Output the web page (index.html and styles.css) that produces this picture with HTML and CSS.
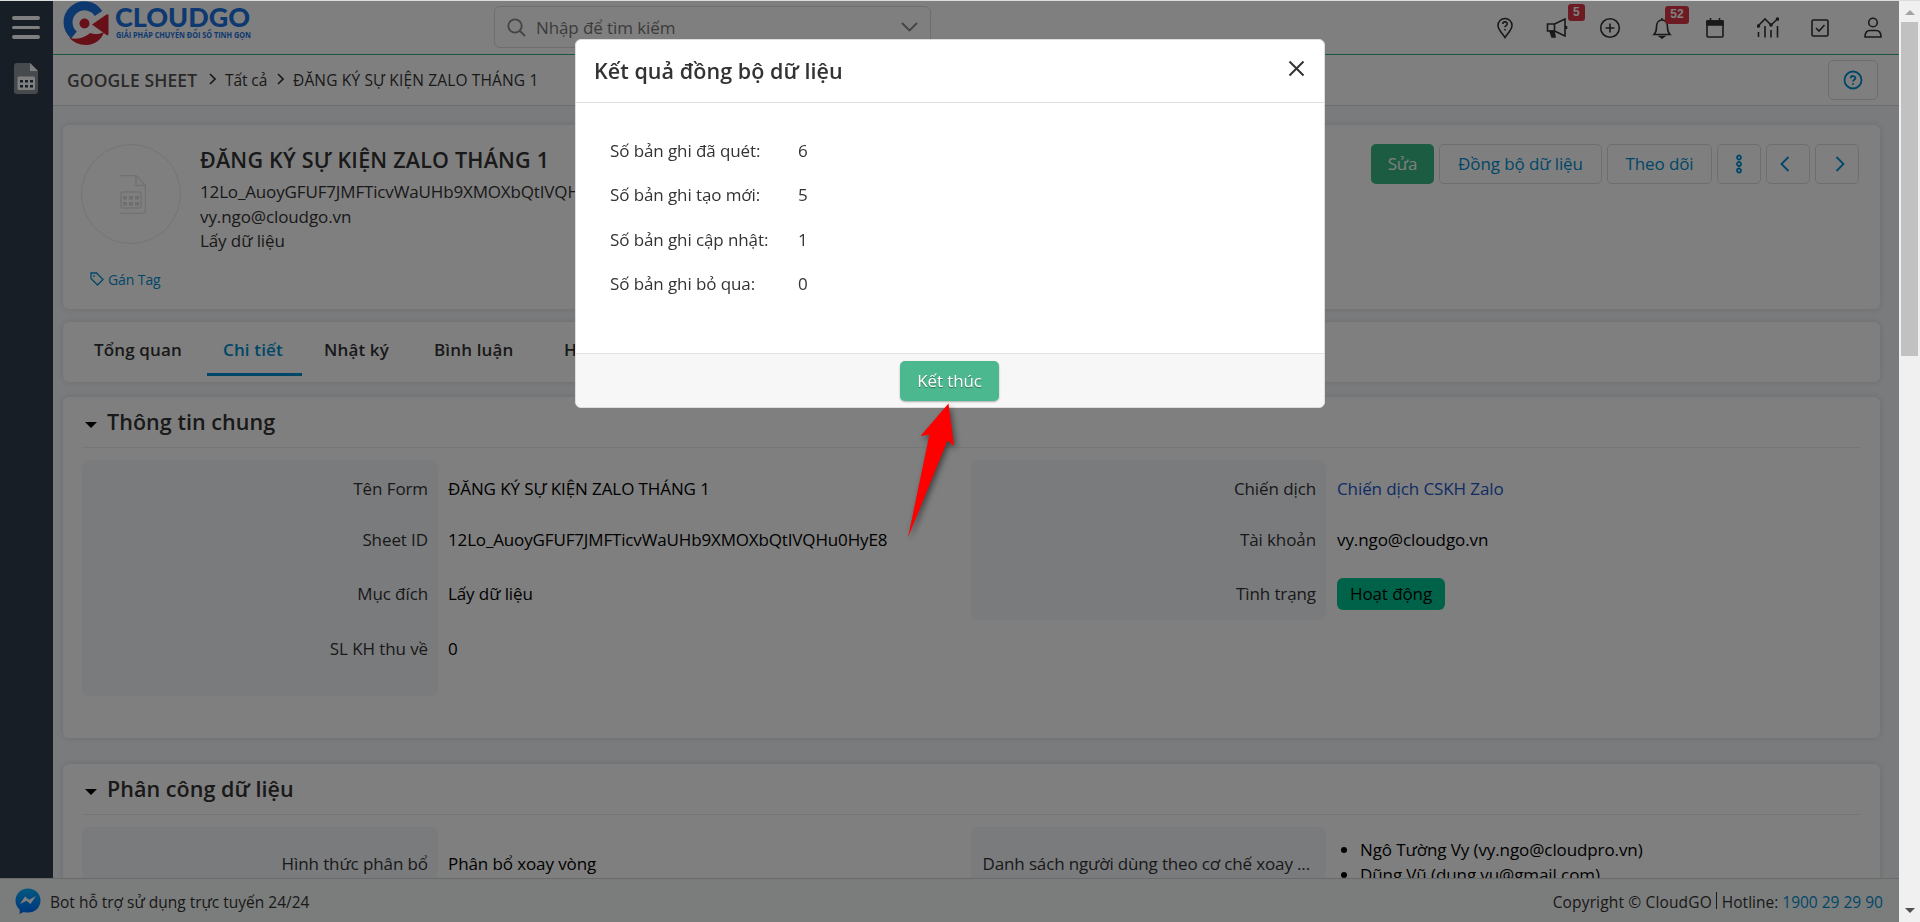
FILE: index.html
```html
<!DOCTYPE html>
<html lang="vi">
<head>
    <meta charset="UTF-8">
    <meta name="viewport" content="width=device-width, initial-scale=1.0">
    <title>CloudGO - Google Sheet</title>
    <link rel="stylesheet" href="styles.css">
</head>
<body>
    <div class="window">
        <div class="page">
            <div class="main">
                <!-- Sidebar -->
                <nav class="sidebar">
                    <div class="menu-toggle"><span></span><span></span><span></span></div>
                    <svg class="module-icon" width="24" height="31" viewBox="0 0 24 31">
                        <path d="M3 0h13l8 8v20a3 3 0 0 1-3 3H3a3 3 0 0 1-3-3V3a3 3 0 0 1 3-3z" fill="#8f959b"/>
                        <path d="M16 0v8h8z" fill="#fff"/>
                        <rect x="3.5" y="13.5" width="17.500" height="13.500" rx="1.500" fill="#fff"/>
                        <path d="M6 17h3v2.500H6zM11 17h3v2.500h-3zM16 17h3v2.500h-3zM6 22h3v2.500H6zM11 22h3v2.500h-3zM16 22h3v2.500h-3z" fill="#2c3b49"/>
                    </svg>
                </nav>

                <div class="content">
                    <!-- Header -->
                    <header class="topbar">
                        <svg class="logo" width="192" height="46" viewBox="0 0 192 46">
                            <path d="M35.500 12.500A16.500 16.500 0 1 0 11 34" fill="none" stroke="#1a72e0" stroke-width="9"/>
                            <path d="M6 36.500c8 3 16 0 21-4.500 6 2 10 1 14-1-2 7-9 13-18 13-7 0-13-3-17-7.500z" fill="#cf2030"/>
                            <circle cx="21.500" cy="22.500" r="5" fill="#cf2030"/>
                            <path d="M29 23.500L43.500 13.500q2-1 2 1v18.500q0 2-2 1z" fill="#cf2030"/>
                            <text class="logo-name" x="52" y="26" textLength="135" lengthAdjust="spacingAndGlyphs">CLOUDGO</text>
                            <text class="logo-slogan" x="53" y="37" textLength="135" lengthAdjust="spacingAndGlyphs">GIẢI PHÁP CHUYỂN ĐỔI SỐ TINH GỌN</text>
                        </svg>
                        <div class="search">
                            <svg width="19" height="19" viewBox="0 0 19 19"><circle cx="8" cy="8" r="6.700"/><path d="M13 13l5 5"/></svg>
                            <span>Nhập để tìm kiếm</span>
                            <svg width="17" height="10" viewBox="0 0 17 10"><path d="M1 1l7.500 7.500L16 1"/></svg>
                        </div>
                        <div class="tools">
                            <div class="tool">
                                <svg viewBox="0 0 22 22"><path d="M11 20.500C8 16 4 12.500 4 8.500a7 7 0 0 1 14 0c0 4-4 7.500-7 12z"/><path d="M8.800 7c.2-3 4.600-2.700 4.400 0-.1 1.500-2.200 1.600-2.200 3.200M11 12v1.500"/></svg>
                            </div>
                            <div class="tool">
                                <svg viewBox="0 0 22 22"><path d="M1.500 7h7v7h-7zM8.500 7L19 2v17L8.500 14M20.500 9v3"/><path d="M4 14h4l1 6H6z" fill="#333"/></svg>
                                <b class="badge">5</b>
                            </div>
                            <div class="tool">
                                <svg viewBox="0 0 22 22"><circle cx="11" cy="11" r="9.300"/><path d="M11 6.500v9M6.500 11h9"/></svg>
                            </div>
                            <div class="tool">
                                <svg viewBox="0 0 22 22"><path d="M3 17.500c2-2 2.500-4 2.500-7.500 0-4 2-7 5.500-7s5.500 3 5.500 7c0 3.500.5 5.500 2.500 7.500zM11 1v2"/><path d="M9 19.500h4l-2 1.500z" fill="#333"/></svg>
                                <b class="badge badge-wide">52</b>
                            </div>
                            <div class="tool">
                                <svg viewBox="0 0 22 22"><rect x="3" y="4" width="16" height="16" rx="1"/><path d="M3 4h16v4H3zM6.500 1v3M15.500 1v3" fill="#333"/></svg>
                            </div>
                            <div class="tool">
                                <svg viewBox="0 0 22 22"><path d="M1 9l7-7 6 6 7-6.500"/><path d="M1.500 15v5M8 9v11.500M14 13v7.500M20.500 9v11.500"/><circle cx="1.500" cy="9" r="1" fill="#333"/><circle cx="14" cy="8" r="1" fill="#333"/><circle cx="20.500" cy="2" r="1" fill="#333"/></svg>
                            </div>
                            <div class="tool">
                                <svg viewBox="0 0 22 22"><rect x="3" y="3" width="16" height="16" rx="1.500"/><path d="M7 11l3 3 5.500-6"/></svg>
                            </div>
                            <div class="tool">
                                <svg viewBox="0 0 22 22"><circle cx="11" cy="5.500" r="4.300"/><path d="M3 20c0-4 2-6.500 5-6.500h6c3 0 5 2.500 5 6.500z"/></svg>
                            </div>
                        </div>
                    </header>

                    <!-- Breadcrumb -->
                    <div class="breadcrumb">
                        <span class="crumb-module">GOOGLE SHEET</span>
                        <svg width="7" height="12" viewBox="0 0 7 12"><path d="M1 1l5 5-5 5"/></svg>
                        <span class="crumb crumb-all">Tất cả</span>
                        <svg width="7" height="12" viewBox="0 0 7 12"><path d="M1 1l5 5-5 5"/></svg>
                        <span class="crumb crumb-name">ĐĂNG KÝ SỰ KIỆN ZALO THÁNG 1</span>
                        <div class="btn help-btn">
                            <svg width="20" height="20" viewBox="0 0 20 20"><circle cx="10" cy="10" r="8.500"/><path d="M7.600 8.200c.2-3 4.900-2.800 4.800 0-.1 1.600-2.400 1.700-2.400 3.300M10 13.200v1.500"/></svg>
                        </div>
                    </div>

                    <div class="body">
                        <!-- Record summary -->
                        <section class="card summary">
                            <div class="avatar">
                                <svg width="30" height="39" viewBox="0 0 30 39">
                                    <path d="M4 .5h16l9.500 10V35a3.500 3.500 0 0 1-3.500 3.500H4"/>
                                    <path d="M20 .5v10h9.500"/>
                                    <rect x="5" y="17" width="20" height="16" rx="2"/>
                                    <path class="dots" d="M7 21h4v3.500H7zM13 21h4v3.500h-4zM19 21h4v3.500h-4zM7 27h4v3.500H7zM13 27h4v3.500h-4zM19 27h4v3.500h-4z"/>
                                </svg>
                            </div>
                            <div class="summary-info">
                                <h1>ĐĂNG KÝ SỰ KIỆN ZALO THÁNG 1</h1>
                                <p class="sheet-id">12Lo_AuoyGFUF7JMFTicvWaUHb9XMOXbQtIVQHu0HyE8</p>
                                <p>vy.ngo@cloudgo.vn</p>
                                <p>Lấy dữ liệu</p>
                            </div>
                            <div class="actions">
                                <div class="btn btn-edit">Sửa</div>
                                <div class="btn btn-sync">Đồng bộ dữ liệu</div>
                                <div class="btn btn-follow">Theo dõi</div>
                                <div class="btn btn-icon"><svg width="8" height="20" viewBox="0 0 8 20"><circle cx="4" cy="3.500" r="2"/><circle cx="4" cy="10" r="2"/><circle cx="4" cy="16.500" r="2"/></svg></div>
                                <div class="btn btn-icon btn-prev"><svg width="10" height="16" viewBox="0 0 10 16"><path d="M8.500 1L1.500 8l7 7"/></svg></div>
                                <div class="btn btn-icon btn-next"><svg width="10" height="16" viewBox="0 0 10 16"><path d="M1.500 1l7 7-7 7"/></svg></div>
                            </div>
                            <div class="tag">
                                <svg width="14" height="14" viewBox="0 0 14 14"><path d="M1 1h5.500L13 7.500 7.500 13 1 6.500z"/><circle cx="4" cy="4" r=".3"/></svg>
                                <span>Gán Tag</span>
                            </div>
                        </section>

                        <!-- Tabs -->
                        <section class="card tabs">
                            <div class="tab tab-overview"><span>Tổng quan</span></div>
                            <div class="tab tab-detail active"><span>Chi tiết</span></div>
                            <div class="tab tab-log"><span>Nhật ký</span></div>
                            <div class="tab tab-comment"><span>Bình luận</span></div>
                            <div class="tab"><span>Hoạt động</span></div>
                        </section>

                        <section class="card block block-general">
                            <h2><i class="caret"></i><span>Thông tin chung</span></h2>
                            <div class="fields">
                                <div class="labels labels-long">
                                    <div>Tên Form</div>
                                    <div>Sheet ID</div>
                                    <div>Mục đích</div>
                                    <div>SL KH thu về</div>
                                </div>
                                <div class="values">
                                    <div class="v-name">ĐĂNG KÝ SỰ KIỆN ZALO THÁNG 1</div>
                                    <div class="sheet-id">12Lo_AuoyGFUF7JMFTicvWaUHb9XMOXbQtIVQHu0HyE8</div>
                                    <div>Lấy dữ liệu</div>
                                    <div>0</div>
                                </div>
                                <div class="labels">
                                    <div>Chiến dịch</div>
                                    <div>Tài khoản</div>
                                    <div>Tình trạng</div>
                                </div>
                                <div class="values values-right">
                                    <div><a class="campaign">Chiến dịch CSKH Zalo</a></div>
                                    <div>vy.ngo@cloudgo.vn</div>
                                    <div class="v-status"><span class="status">Hoạt động</span></div>
                                </div>
                            </div>
                        </section>

                        <section class="card block block-assign">
                            <h2><i class="caret"></i><span>Phân công dữ liệu</span></h2>
                            <div class="fields fields-assign">
                                <div class="labels">
                                    <div>Hình thức phân bổ</div>
                                </div>
                                <div class="values">
                                    <div>Phân bổ xoay vòng</div>
                                </div>
                                <div class="labels">
                                    <div class="label-cut">Danh sách người dùng theo cơ chế xoay ...</div>
                                </div>
                                <ul class="users">
                                    <li>Ngô Tường Vy (vy.ngo@cloudpro.vn)</li>
                                    <li>Dũng Vũ (dung.vu@gmail.com)</li>
                                </ul>
                            </div>
                        </section>
                    </div>
                </div>
            </div>

            <footer class="footer">
                <svg width="26" height="26" viewBox="0 0 26 26">
                    <defs><linearGradient id="msg" x1="0" y1="0" x2="0" y2="1"><stop offset="0" stop-color="#00b2ff"/><stop offset="1" stop-color="#006aff"/></linearGradient></defs>
                    <path d="M13 .5C6 .5.500 5.500.500 12.500c0 3.800 1.600 7 4.200 9.200V26l4-2c1.300.4 2.800.6 4.300.6 7 0 12.500-5.200 12.500-12.100S20 .5 13 .5z" fill="url(#msg)"/>
                    <path d="M5 16l5-7.500 4 3.200L21 8l-5.500 8-4-3.200z" fill="#fff"/>
                </svg>
                <span class="bot">Bot hỗ trợ sử dụng trực tuyến 24/24</span>
                <span class="copyright">Copyright © CloudGO</span>
                <i class="sep"></i>
                <span class="hotline">Hotline: <a>1900 29 29 90</a></span>
            </footer>
        </div>

        <!-- Scrollbar -->
        <div class="scrollbar">
            <i class="arrow-up"></i>
            <div class="thumb"></div>
            <i class="arrow-down"></i>
        </div>
    </div>

    <div class="backdrop"></div>

    <!-- Sync result modal -->
    <div class="modal">
        <div class="modal-header">
            <h3>Kết quả đồng bộ dữ liệu</h3>
            <svg width="17" height="17" viewBox="0 0 17 17"><path d="M1.500 1.500l14 14M15.500 1.500l-14 14"/></svg>
        </div>
        <div class="modal-body">
            <div class="result"><span>Số bản ghi đã quét:</span><span>6</span></div>
            <div class="result"><span>Số bản ghi tạo mới:</span><span>5</span></div>
            <div class="result"><span>Số bản ghi cập nhật:</span><span>1</span></div>
            <div class="result"><span>Số bản ghi bỏ qua:</span><span>0</span></div>
        </div>
        <div class="modal-footer">
            <div class="finish-btn">Kết thúc</div>
        </div>
    </div>

    <!-- Pointer to the finish button -->
    <svg class="pointer" width="60" height="150" viewBox="0 0 60 150">
        <path d="M48.500 3.500L54 46l-6.500-5.500L8 137.500 29.500 34.500 20.500 36z" fill="#f00"/>
    </svg>
</body>
</html>
```
FILE: styles.css
```css
* {
    box-sizing: border-box;
    margin: 0;
    padding: 0;
}
body {
    width: 1920px;
    height: 922px;
    overflow: hidden;
    font-family: "Open Sans", "Noto Sans", sans-serif;
    font-size: 17px;
    font-weight: 400;
    line-height: 24px;
    letter-spacing: -0.1px;
    color: #333;
    white-space: nowrap;
}
svg {
    display: block;
    flex: none;
    fill: none;
    stroke-width: 1.6;
}
.window {
    display: flex;
    height: 922px;
    border-top: 1px solid #dcdcdc;
}
.page {
    width: 1899px;
    display: flex;
    flex-direction: column;
}
.main {
    display: flex;
    height: 877px;
    overflow: hidden;
}

/* Sidebar */
.sidebar {
    width: 53px;
    flex: none;
    padding: 15px 0 0 12px;
    background: #2e3c4a;
}
.menu-toggle {
    display: flex;
    flex-direction: column;
    gap: 6px;
    margin-bottom: 24px;
}
.menu-toggle span {
    width: 28px;
    height: 3.5px;
    border-radius: 2px;
    background: #fff;
}
.module-icon {
    margin-left: 2px;
}
.content {
    flex: 1;
    min-width: 0;
    background: #f4f6f9;
}

/* Topbar */
.topbar {
    display: flex;
    height: 54px;
    padding-left: 10px;
    background: #fff;
    border-bottom: 1px solid #36b37e;
}
.logo {
    overflow: visible;
}
.logo text {
    font-family: Lato, sans-serif;
    font-weight: 900;
    letter-spacing: 0;
    fill: #1a72e0;
}
.logo .logo-name {
    font-size: 26px;
}
.logo .logo-slogan {
    font-family: "Open Sans", sans-serif;
    font-size: 8px;
    font-weight: 700;
}
.search {
    display: flex;
    align-items: center;
    width: 437px;
    height: 42px;
    margin: 5px 0 0 239px;
    padding: 0 12px;
    border: 1px solid #dcdcdc;
    border-radius: 6px;
    color: #777;
}
.search svg {
    stroke: #888;
    stroke-width: 1.8;
}
.search span {
    flex: 1;
    padding-top: 1px;
    margin-left: 10px;
}
.tools {
    display: flex;
    align-items: center;
    margin-left: auto;
}
.tool {
    position: relative;
    width: 52.600px;
    display: flex;
    justify-content: center;
}
.tool svg {
    width: 22px;
    height: 22px;
    stroke: #333;
}
.badge {
    position: absolute;
    left: 37px;
    top: -13px;
    width: 17px;
    height: 17px;
    border-radius: 3px;
    background: #dc3545;
    color: #fff;
    font: bold 12px/17px "Liberation Sans", sans-serif;
    letter-spacing: 0;
    text-align: center;
}
.badge-wide {
    left: 29px;
    top: -11px;
    width: 24px;
    height: 18px;
}

/* Breadcrumb */
.breadcrumb {
    display: flex;
    align-items: center;
    height: 51px;
    padding: 0 21px 0 14px;
    background: #fff;
    border-bottom: 1px solid #dadada;
}
.breadcrumb > svg {
    stroke: #333;
    margin: -2px 9px 0 10px;
}
.crumb-module {
    width: 132px;
    font-size: 17.500px;
    font-weight: 550;
    letter-spacing: 0.1px;
    color: #555;
}
.crumb {
    font-size: 15.500px;
}
.crumb-all {
    width: 42px;
}
.crumb-name {
    letter-spacing: 0.15px;
}
.btn {
    display: flex;
    align-items: center;
    justify-content: center;
    height: 40px;
    border: 1px solid #dcdcdc;
    border-radius: 5px;
    color: #008ecf;
}
.btn svg {
    stroke: #008ecf;
    stroke-width: 1.8;
}
.help-btn {
    width: 50px;
    margin-left: auto;
}

/* Cards */
.body {
    padding: 19px 19px 0 10px;
}
.card {
    background: #fff;
    border-radius: 6px;
    box-shadow: 0 0 6px rgba(0, 0, 0, 0.12);
}
.summary {
    display: grid;
    grid-template-columns: 119px 1fr auto;
    grid-template-rows: 118px auto;
    height: 184px;
    padding: 19px 21px 0 18px;
    margin-bottom: 13px;
}
.avatar {
    display: flex;
    align-items: center;
    justify-content: center;
    width: 100px;
    height: 100px;
    border: 1px solid #e8e8e8;
    border-radius: 50%;
}
.avatar svg {
    stroke: #e4e4e4;
    stroke-width: 1.5;
}
.avatar .dots {
    fill: #dcdcdc;
    stroke: none;
}
.summary-info h1 {
    font-size: 21.500px;
    font-weight: 550;
    line-height: 31px;
    letter-spacing: 0.2px;
    margin-bottom: 5px;
}
.summary-info p {
    line-height: 24.500px;
}
.sheet-id {
    letter-spacing: -0.15px;
}
.actions {
    display: flex;
    gap: 5px;
    align-items: flex-start;
}
.btn-edit {
    width: 63px;
    border: none;
    background: #36b886;
    color: #fff;
}
.btn-sync {
    width: 163px;
}
.btn-follow {
    width: 105px;
}
.btn-icon {
    width: 44px;
}
.btn-prev {
    padding-right: 6px;
}
.btn-next {
    padding-left: 6px;
}
.tag {
    display: flex;
    gap: 4px;
    padding: 6px 0 0 9px;
    color: #008ecf;
    font-size: 14px;
}
.tag svg {
    stroke: #008ecf;
    stroke-width: 1.3;
    margin-top: 4px;
}

/* Tabs */
.tabs {
    display: flex;
    height: 60px;
    padding-left: 15px;
    margin-bottom: 15px;
    font-weight: 550;
    letter-spacing: 0.15px;
}
.tab {
    height: 54px;
    padding: 16px 16px 0;
    margin-right: 9px;
}
.tab-overview {
    width: 120px;
}
.tab-detail {
    width: 95px;
    margin-right: 6px;
}
.tab-log {
    width: 101px;
}
.tab-comment {
    width: 121px;
}
.tab.active {
    color: #008ecf;
    border-bottom: 3px solid #008ecf;
}

/* Detail blocks */
.block {
    padding: 0 20px 0 19px;
}
.block-general {
    height: 341px;
    margin-bottom: 26px;
}
.block-assign {
    height: 300px;
}
.block h2 {
    display: flex;
    align-items: center;
    height: 51px;
    padding: 0 0 1px 3px;
    border-bottom: 1px solid #ededed;
    font-size: 21.500px;
    font-weight: 550;
    letter-spacing: 0.05px;
}
.caret {
    margin: 6px 10px 0 0;
    border: 6px solid transparent;
    border-top-color: #000;
    border-bottom: none;
}
.fields {
    display: grid;
    grid-template-columns: 356px 533px 355px 1fr;
    align-items: start;
    padding-top: 12px;
}
.labels {
    height: 160px;
    padding-right: 10px;
    border-radius: 6px;
    background: #f5f7fb;
    text-align: right;
}
.labels-long {
    height: 236px;
}
.values {
    padding-left: 10px;
    color: #000;
}
.values-right {
    padding-left: 11px;
}
.labels div, .values div {
    height: 55px;
    padding-top: 17px;
}
.labels div:nth-child(2), .values div:nth-child(2) {
    height: 50px;
    padding-top: 13px;
}
.labels .label-cut {
    padding-right: 6px;
    letter-spacing: -0.15px;
}
.campaign {
    color: #2057c8;
}
.values .v-status {
    padding-top: 13px;
}
.status {
    display: inline-block;
    height: 32px;
    width: 108px;
    border-radius: 6px;
    background: #00c793;
    line-height: 32px;
    text-align: center;
}
.fields-assign .labels div, .fields-assign .values div {
    padding-top: 25px;
}
.users {
    padding: 10px 0 0 34px;
    color: #000;
    line-height: 25px;
}

/* Footer */
.footer {
    display: flex;
    align-items: center;
    height: 44px;
    padding: 0 16px 0 15px;
    border-top: 1px solid #d2d4d4;
    background: #f7faf9;
    font-size: 15.500px;
    letter-spacing: 0;
}
.footer span {
    padding-top: 2px;
}
.bot {
    margin-left: 9px;
}
.copyright {
    margin-left: auto;
    letter-spacing: 0.15px;
}
.sep {
    width: 1px;
    height: 17px;
    margin: 0 5px 0 4px;
    background: #333;
}
.footer a {
    color: #008ecf;
}

/* Scrollbar */
.scrollbar {
    position: relative;
    z-index: 2;
    display: flex;
    flex-direction: column;
    align-items: center;
    width: 21px;
    background: #f0f0f0;
}
.arrow-up, .arrow-down {
    border: 5px solid transparent;
    border-bottom: 5px solid #a3a3a3;
    border-top: none;
    margin: 9px 0 7px;
}
.arrow-down {
    border-top: 5px solid #505050;
    border-bottom: none;
    margin: auto 0 9px;
}
.thumb {
    width: 17px;
    height: 334px;
    background: #c1c1c1;
}

/* Modal */
.backdrop {
    position: fixed;
    top: 1px;
    left: 0;
    width: 1899px;
    height: 921px;
    background: rgba(0, 0, 0, 0.5);
    z-index: 1;
}
.modal {
    position: fixed;
    top: 39px;
    left: 575px;
    z-index: 3;
    width: 750px;
    height: 369px;
    border: 1px solid #dedede;
    border-radius: 6px;
    overflow: hidden;
    background: #fff;
}
.modal-header {
    display: flex;
    align-items: center;
    justify-content: space-between;
    height: 63px;
    padding: 0 19px 0 18px;
    border-bottom: 1px solid #e2e2e2;
}
.modal-header h3 {
    font-size: 21.500px;
    font-weight: 550;
    letter-spacing: 0.05px;
}
.modal-header svg {
    stroke: #333;
    stroke-width: 2;
    margin-top: -6px;
}
.modal-body {
    height: 250px;
    padding: 26px 34px;
}
.result {
    display: flex;
    line-height: 44.400px;
    height: 44.400px;
}
.result span:first-child {
    width: 188px;
}
.modal-footer {
    height: 56px;
    padding-top: 7px;
    border-top: 1px solid #e2e2e2;
    background: #f7f7f7;
}
.finish-btn {
    width: 99px;
    height: 40px;
    margin-left: 324px;
    border-radius: 5px;
    background: #4cb890;
    box-shadow: 0 1px 2px rgba(0, 0, 0, 0.3);
    color: #fff;
    line-height: 40px;
    text-align: center;
    text-shadow: 0 1px 1px rgba(0, 0, 0, 0.4);
}
.pointer {
    position: fixed;
    top: 400px;
    left: 900px;
    z-index: 4;
    filter: drop-shadow(2px 3px 3px rgba(0, 0, 0, 0.5));
}
```
